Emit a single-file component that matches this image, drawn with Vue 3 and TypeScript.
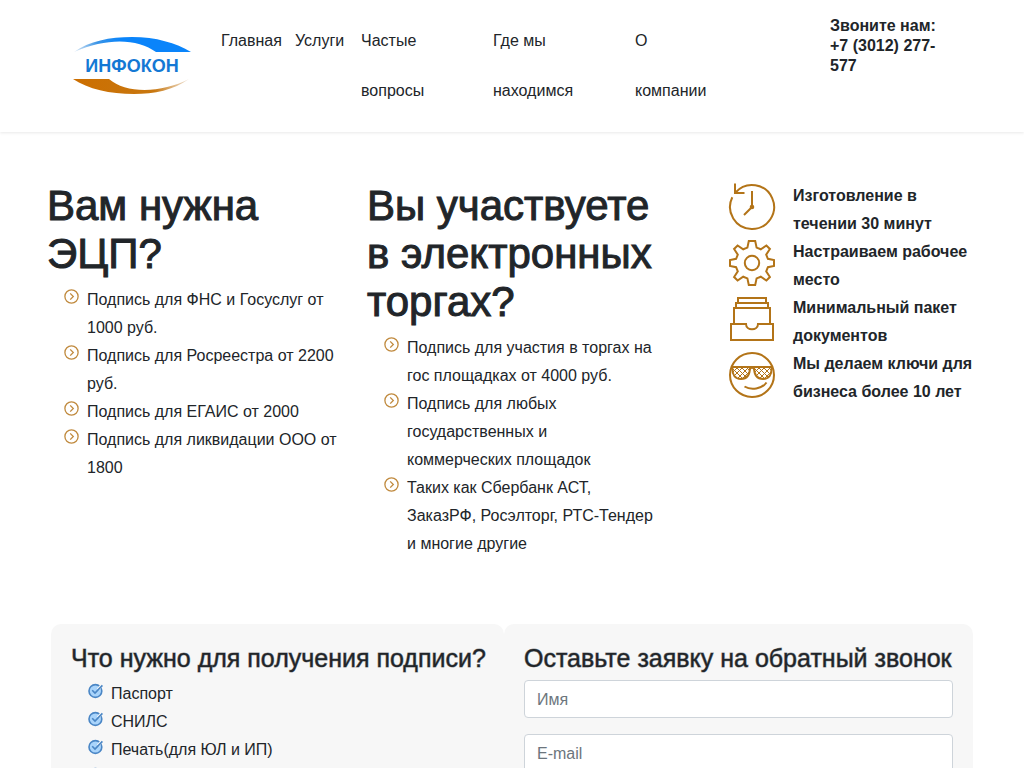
<script setup lang="ts">
interface NavItem {
  lines: string[]
}

const nav: NavItem[] = [
  { lines: ['Главная'] },
  { lines: ['Услуги'] },
  { lines: ['Частые', 'вопросы'] },
  { lines: ['Где мы', 'находимся'] },
  { lines: ['О', 'компании'] },
]

const offers: { title: string[]; items: string[][] }[] = [
  {
    title: ['Вам нужна', 'ЭЦП?'],
    items: [
      ['Подпись для ФНС и Госуслуг от', '1000 руб.'],
      ['Подпись для Росреестра от 2200', 'руб.'],
      ['Подпись для ЕГАИС от 2000'],
      ['Подпись для ликвидации ООО от', '1800'],
    ],
  },
  {
    title: ['Вы участвуете', 'в электронных', 'торгах?'],
    items: [
      ['Подпись для участия в торгах на', 'гос площадках от 4000 руб.'],
      ['Подпись для любых', 'государственных и', 'коммерческих площадок'],
      ['Таких как Сбербанк АСТ,', 'ЗаказРФ, Росэлторг, РТС-Тендер', 'и многие другие'],
    ],
  },
]

const benefits: { icon: string; lines: string[] }[] = [
  { icon: 'clock', lines: ['Изготовление в', 'течении 30 минут'] },
  { icon: 'gear', lines: ['Настраиваем рабочее', 'место'] },
  { icon: 'archive', lines: ['Минимальный пакет', 'документов'] },
  { icon: 'cool', lines: ['Мы делаем ключи для', 'бизнеса более 10 лет'] },
]

const documents: string[] = ['Паспорт', 'СНИЛС', 'Печать(для ЮЛ и ИП)', '']
</script>

<template>
  <div class="page">
    <header class="header">
      <a class="logo" href="#">
        <svg viewBox="0 0 120 62" width="120" height="62" role="img" aria-label="ИНФОКОН">
          <defs>
            <linearGradient id="blueArc" x1="0" x2="1">
              <stop offset="0" stop-color="#dfeaf5" />
              <stop offset="0.2" stop-color="#3a94e6" />
              <stop offset="0.4" stop-color="#0a84fa" />
              <stop offset="1" stop-color="#0a84fa" />
            </linearGradient>
            <linearGradient id="orangeArc" x1="0" x2="1">
              <stop offset="0" stop-color="#cc6e00" />
              <stop offset="0.7" stop-color="#c8770f" />
              <stop offset="1" stop-color="#f0e6da" />
            </linearGradient>
          </defs>
          <path d="M2 17C17 6 38 2 60 2C84 2 104 8 119 17H84C66 4 36 2 2 17Z" fill="url(#blueArc)" />
          <path d="M1 44H37C54 59 90 58 117 44C102 55 82 59 62 59C38 59 16 54 1 44Z" fill="url(#orangeArc)" />
          <text x="60" y="37" text-anchor="middle" class="logo-text">ИНФОКОН</text>
        </svg>
      </a>
      <nav class="nav">
        <a v-for="item in nav" :key="item.lines[0]" href="#">
          <span v-for="line in item.lines" :key="line" class="line">{{ line }}</span>
        </a>
      </nav>
      <div class="phone">
        <span class="line">Звоните нам:</span>
        <span class="line">+7 (3012) 277-</span>
        <span class="line">577</span>
      </div>
    </header>

    <main>
      <section class="intro">
        <div v-for="offer in offers" :key="offer.title[0]" class="offer">
          <h1>
            <span v-for="line in offer.title" :key="line" class="line">{{ line }}</span>
          </h1>
          <ul class="list">
            <li v-for="item in offer.items" :key="item[0]">
              <svg class="bullet" viewBox="0 0 16 16" width="16" height="16" aria-hidden="true">
                <circle cx="7.5" cy="8.5" r="6.6" />
                <path d="M6.2 5.4L9.3 8.5L6.2 11.6" />
              </svg>
              <div>
                <span v-for="line in item" :key="line" class="line">{{ line }}</span>
              </div>
            </li>
          </ul>
        </div>

        <ul class="benefits">
          <li v-for="b in benefits" :key="b.icon">
            <svg class="icon" viewBox="0 0 48 48" width="48" height="48" aria-hidden="true">
              <g v-if="b.icon === 'clock'">
                <path d="M4.3 14.3A22 22 0 1 0 7.5 9.5" />
                <path d="M7 0.5V10H16.5" />
                <path d="M24 8V24L16 32" />
                <circle cx="24" cy="24" r="1.3" fill="#b37418" />
              </g>
              <g v-else-if="b.icon === 'gear'">
                <path
                  d="M20.8 2H27.2L28.6 8.6L32.8 10.3L38.4 6.5L41.9 10L38.2 15.6L39.9 19.8L46 21V27L39.9 28.2L38.2 32.4L41.9 38L38.4 41.5L32.8 37.7L28.6 39.4L27.2 46H20.8L19.4 39.4L15.2 37.7L9.6 41.5L6.1 38L9.8 32.4L8.1 28.2L2 27V21L8.1 19.8L9.8 15.6L6.1 10L9.6 6.5L15.2 10.3L19.4 8.6Z"
                />
                <circle cx="24" cy="24" r="7.2" />
              </g>
              <g v-else-if="b.icon === 'archive'">
                <path d="M10 8V3H38V8M8 13V8H40V13M6 28V13H42V28" />
                <path d="M3 29H18C18 36 30 36 30 29H45V45H3Z" />
              </g>
              <g v-else>
                <circle cx="24" cy="24" r="22" />
                <path d="M3 16H45M21.5 18C23 16.5 25 16.5 26.5 18" />
                <path
                  d="M4.5 16C4 24 7 28 13 28C19 28 22 24 22 16M26 16C26 24 29 28 35 28C41 28 44 24 43.5 16"
                />
                <path
                  class="mesh"
                  d="M5 21L10 16M6 25L15 16M10 27L20 17M15 27L21 21M5 18L14 27M8 16L18 26M13 16L21 24M18 16L21 19M27 21L32 16M28 25L37 16M32 27L42 17M37 27L43 21M27 18L36 27M30 16L40 26M35 16L43 24M40 16L43 19"
                />
                <path d="M16.5 35.5C23 39.5 34 38 38.5 31.5" />
              </g>
            </svg>
            <div>
              <span v-for="line in b.lines" :key="line" class="line">{{ line }}</span>
            </div>
          </li>
        </ul>
      </section>

      <section class="cards">
        <div class="card">
          <h2>Что нужно для получения подписи?</h2>
          <ul class="documents">
            <li v-for="(doc, i) in documents" :key="i">
              <svg class="tick" viewBox="0 0 16 16" width="16" height="16" aria-hidden="true">
                <circle cx="7.4" cy="8" r="6.4" />
                <path class="gap" d="M10 6.5L15.5 0.5" />
                <path d="M4.2 7.2L7 10L14.4 2.4" />
              </svg>
              <span>{{ doc }}</span>
            </li>
          </ul>
        </div>
        <form class="card" @submit.prevent>
          <h2>Оставьте заявку на обратный звонок</h2>
          <input type="text" name="name" placeholder="Имя" aria-label="Имя" />
          <input type="email" name="email" placeholder="E-mail" aria-label="E-mail" />
        </form>
      </section>
    </main>
  </div>
</template>

<style>
body {
  margin: 0;
  background: #fff;
}
</style>

<style scoped>
.page {
  height: 100vh;
  overflow: hidden;
  color: #212529;
  font-family: 'Liberation Sans', Arial, sans-serif;
  font-size: 16px;
  line-height: 28px;
}

.page * {
  box-sizing: border-box;
}

.line {
  display: block;
  white-space: nowrap;
}

ul {
  list-style: none;
  margin: 0;
  padding: 0;
}

.header {
  display: grid;
  grid-template-columns: 141px 1fr 194px;
  min-height: 132px;
  padding-left: 72px;
  box-shadow: 0 1px 3px rgba(0, 0, 0, 0.09);
}

.logo {
  padding-top: 35px;
}

.logo svg {
  display: block;
}

.logo-text {
  fill: #1478d4;
  font-size: 18px;
  font-weight: 700;
}

.nav {
  display: grid;
  grid-template-columns: 74px 66px 132px 142px 1fr;
  padding-top: 16px;
}

.nav a {
  padding: 0 8px;
  color: inherit;
  text-decoration: none;
  line-height: 50px;
}

.phone {
  padding-top: 16px;
  font-weight: 700;
  line-height: 20px;
}

.intro {
  display: grid;
  grid-template-columns: 1fr 1fr 1fr;
  min-height: 376px;
  margin: 50px 17px 0 47px;
}

h1,
h2 {
  margin: 0 0 8px;
  font-weight: 400;
}

h1 {
  font-size: 42px;
  line-height: 48px;
  -webkit-text-stroke: 1px #212529;
}

.list {
  padding-left: 17px;
}

.list li {
  display: flex;
  gap: 7px;
}

.bullet {
  flex: none;
  margin-top: 2px;
  fill: none;
  stroke: #c08a3e;
  stroke-width: 1.3;
}

.benefits {
  padding-left: 41px;
  font-weight: 700;
}

.benefits li {
  display: flex;
  gap: 17px;
}

.icon {
  flex: none;
  margin-top: 1px;
  fill: none;
  stroke: #b37418;
  stroke-width: 2;
}

.icon .mesh {
  stroke-width: 1;
}

.cards {
  display: grid;
  grid-template-columns: minmax(0, 453fr) minmax(0, 469fr);
  margin: 66px 51px 0;
}

.card {
  padding: 20px;
  border-radius: 10px;
  background: #f7f7f7;
}

h2 {
  font-size: 25px;
  line-height: 28px;
  white-space: nowrap;
  -webkit-text-stroke: 1px rgba(33, 37, 41, 0.5);
}

.documents {
  padding-left: 17px;
}

.documents li {
  display: flex;
  gap: 7px;
  min-height: 28px;
}

.tick {
  flex: none;
  margin-top: 3px;
  fill: #a9d4fb;
  stroke: #4a86c5;
  stroke-width: 1.6;
}

.tick path {
  fill: none;
}

.tick .gap {
  stroke: #f7f7f7;
  stroke-width: 3;
}

input {
  display: block;
  width: 100%;
  height: 38px;
  margin: 0 0 16px;
  padding: 7px 12px 5px;
  border: 1px solid #ced4da;
  border-radius: 4px;
  background: #fff;
  color: #495057;
  font: inherit;
  line-height: 24px;
}

input::placeholder {
  color: #6c757d;
  opacity: 1;
}
</style>
